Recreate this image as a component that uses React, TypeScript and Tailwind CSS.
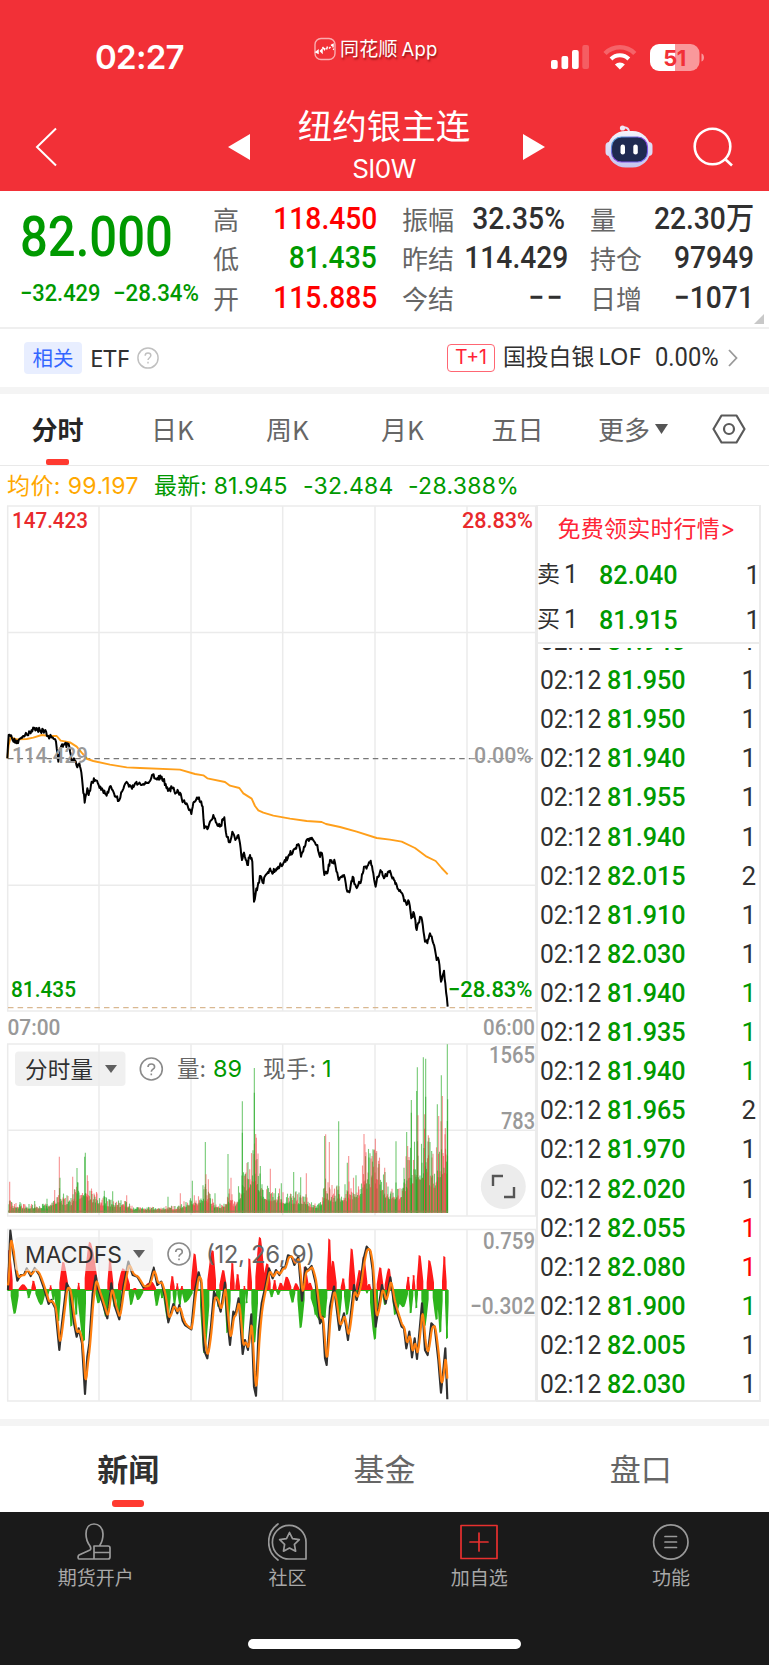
import React from "react";

type Pt = [number, number];
type Lobe = [number, number, number, number];
type Spike = [number, number, "r" | "g"];

const UNIT = 3;
const shift = (pts: Pt[], dx: number, dy: number): Pt[] =>
  pts.map(([x, y]) => [(x + dx) / UNIT, (y + dy) / UNIT]);

function rng(seed: number) {
  let s = seed;
  return () => {
    s = (s * 1664525 + 1013904223) % 4294967296;
    return s / 4294967296;
  };
}

const toPoints = (pts: Pt[]) => pts.map(([x, y]) => x.toFixed(2) + "," + y.toFixed(2)).join(" ");

function roughen(pts: Pt[], amp: number, seed: number): Pt[] {
  const rand = rng(seed);
  const out: Pt[] = [];
  for (let i = 0; i < pts.length - 1; i++) {
    const [x0, y0] = pts[i];
    const [x1, y1] = pts[i + 1];
    const n = Math.max(1, Math.round((x1 - x0) / 0.75));
    out.push(pts[i]);
    for (let k = 1; k < n; k++) {
      out.push([x0 + ((x1 - x0) * k) / n, y0 + ((y1 - y0) * k) / n + (rand() - 0.5) * 2 * amp]);
    }
  }
  out.push(pts[pts.length - 1]);
  return out;
}

const price: Pt[] = [
  ...shift([[22,235],[26,165],[36,175],[50,190],[65,172],[80,163],[92,160],[102,146],[110,144],[122,155],[134,152],[145,168],[158,172],[168,185],[175,245],[182,205],[195,190],[208,200],[215,245],[222,235],[232,262],[238,250],[246,295],[254,368],[262,325],[266,345],[275,305],[286,300],[296,315],[306,325],[320,347],[332,318],[340,335],[356,363],[366,335],[382,308],[394,322],[405,310],[425,315],[448,305],[456,285],[470,298],[485,290],[497,312],[504,333],[516,322],[528,338],[535,335],[545,355],[555,370],[565,385],[574,402],[582,365],[597,352],[608,380],[613,445],[622,448],[630,425],[640,405],[650,430],[660,440],[673,412],[680,470],[688,487],[697,455],[706,480],[715,465],[720,490],[726,540],[732,518],[742,555],[750,525],[757,545],[759,600],[762,665],[767,640],[775,608],[782,588],[788,608],[797,585],[808,570]], 0, 2040),
  ...shift([[95,395],[110,385],[130,370],[145,348],[160,330],[175,312],[183,350],[192,320],[200,300],[213,298],[225,308],[232,315],[238,345],[246,340],[253,405],[262,400],[270,360],[285,368],[296,420],[312,405],[322,455],[330,450],[338,410],[348,440],[364,420],[372,380],[382,378],[392,362],[400,400],[407,440],[412,410],[424,395],[432,415],[450,392],[462,420],[470,435],[480,450],[490,470],[500,495],[507,485],[514,535],[522,520],[530,570],[540,530],[546,540],[555,605],[562,610],[570,580],[580,610],[590,660],[596,660],[603,725],[612,692],[616,730],[623,800]], 720, 2220),
];

const average: Pt[] = [
  ...shift([[22,235],[26,195],[32,172],[50,178],[80,177],[100,173],[125,165],[150,168],[170,168],[182,182],[210,187],[230,200],[245,218],[262,237],[280,243],[330,254],[380,262],[420,264],[540,269],[585,282],[610,286],[622,295],[675,306],[690,317],[718,324],[730,340],[755,356],[765,378],[775,391],[790,398]], 0, 2040),
  ...shift([[100,227],[150,236],[200,243],[245,246],[258,252],[300,261],[350,275],[410,294],[450,299],[485,305],[525,324],[560,350],[587,363],[605,384],[623,403]], 720, 2220),
];

const dif: Pt[] = [
  ...([[24,780],[31,602],[38,660],[52,752],[62,735],[72,735],[80,715],[92,738],[104,714],[118,735],[132,775],[146,822],[154,810],[166,835],[178,960],[186,880],[200,760],[210,780],[222,880],[230,920],[236,895],[246,940],[255,1092],[262,980],[268,940],[278,790],[287,737],[295,780],[305,810],[322,865],[334,760],[345,830],[358,868],[370,770],[385,695],[398,735],[412,740],[430,772],[448,765],[461,713],[472,765],[484,755],[495,800],[505,877],[520,822],[532,850],[538,825],[548,872],[555,885],[574,898],[585,780],[596,727],[604,760],[612,960],[622,985],[632,900],[642,785],[652,810],[662,845],[675,758],[682,870],[690,945],[700,845],[706,855],[716,805],[728,972],[735,930],[744,960],[754,853],[762,1070],[768,1097],[776,900],[785,820]] as Pt[]),
  ...([[5,820],[16,770],[27,715],[38,745],[48,720],[58,735],[68,712],[75,715],[84,676],[95,680],[103,705],[115,680],[126,812],[136,712],[143,722],[155,708],[167,760],[180,880],[188,860],[195,985],[200,1005],[210,830],[222,770],[238,900],[252,850],[264,930],[275,830],[282,765],[290,810],[302,755],[310,690],[320,650],[330,662],[338,720],[347,890],[366,765],[377,820],[391,742],[402,820],[412,850],[425,890],[432,895],[439,955],[448,905],[456,982],[464,925],[471,987],[486,820],[495,960],[503,975],[514,880],[524,890],[535,990],[543,1088],[550,1020],[556,955],[562,1108]] as Pt[]).map(([x, y]): Pt => [x + 780, y]),
];

const level = (pts: Pt[], x: number) => {
  for (let i = 0; i < pts.length - 1; i++) {
    if (x <= pts[i + 1][0]) {
      const t = (x - pts[i][0]) / (pts[i + 1][0] - pts[i][0]);
      return pts[i][1] + (pts[i + 1][1] - pts[i][1]) * Math.max(0, t);
    }
  }
  return pts[pts.length - 1][1];
};

const dea: Pt[] = [];
{
  let v = 760;
  for (let x = 24; x <= 1343; x += 1) {
    v += (level(dif, x) - v) * (x < 40 ? 0.3 : 0.22);
    if (x % 2 === 0) dea.push([x, v]);
  }
}

const redLobes: Lobe[] = [
  ...([[22,38,28,120],[56,82,70,17],[94,108,100,28],[148,156,152,14],[178,204,190,85],[232,240,236,22],[254,292,270,145],[322,340,330,90],[354,390,370,65],[396,412,405,6],[428,468,455,25],[510,524,517,42],[528,536,532,20],[541,550,546,12],[573,595,584,110],[622,648,638,120],[658,680,670,60],[690,704,697,82],[706,720,713,48],[730,737,733,12],[742,756,748,95],[766,794,780,160],[788,812,802,80]] as Lobe[]),
  ...([[38,50,44,30],[54,72,62,22],[70,94,80,40],[100,118,108,20],[128,146,134,70],[142,158,150,22],[200,216,208,155],[210,230,219,88],[242,256,250,35],[266,286,275,125],[288,308,299,60],[304,322,311,100],[318,334,328,18],[350,370,361,68],[374,396,387,65],[438,450,445,40],[456,466,461,45],[470,490,479,105],[500,522,508,90],[546,560,553,102]] as Lobe[]).map(([a, b, p, h]): Lobe => [a + 780, b + 780, p + 780, h]),
];
const greenLobes: Lobe[] = [
  ...([[32,56,44,72],[80,94,86,25],[106,136,124,45],[135,148,142,20],[154,166,160,30],[164,182,175,95],[206,222,214,110],[222,234,229,75],[234,258,252,155],[286,308,295,40],[304,328,318,80],[334,350,344,50],[348,364,356,75],[386,404,393,45],[404,430,414,30],[462,480,470,48],[480,492,486,25],[490,512,504,90],[518,530,523,50],[532,546,540,45],[546,578,556,38],[600,628,613,190],[648,662,655,50],[674,692,682,130],[718,736,727,160],[736,744,740,40],[754,774,763,160]] as Lobe[]),
  ...([[28,42,35,22],[48,62,55,15],[88,106,98,38],[112,134,122,115],[152,202,185,100],[156,178,167,75],[190,202,194,85],[226,246,236,95],[252,272,261,75],[284,298,290,30],[316,326,321,10],[330,354,345,150],[366,382,375,45],[396,425,405,75],[406,444,430,52],[446,460,452,70],[464,474,469,55],[484,506,494,110],[518,536,530,90],[532,548,541,128],[555,566,561,148]] as Lobe[]).map(([a, b, p, h]): Lobe => [a + 780, b + 780, p + 780, h]),
];
const lobePath = (lobes: Lobe[], dir: number) =>
  lobes
    .map(([a, b, p, h]) => {
      const at = (f: number) => 780 + dir * h * f;
      return `M${a} 780 L${a} ${at(0.25)} L${(a + p) / 2} ${at(0.78)} L${p - 3} ${at(1)} L${p + 3} ${at(0.97)} L${(b + p) / 2} ${at(0.76)} L${b} ${at(0.25)} L${b} 780Z`;
    })
    .join("");

const envelope: Pt[] = [[24,50],[35,22],[90,18],[150,20],[175,60],[185,45],[215,35],[230,70],[258,100],[270,60],[300,40],[340,28],[380,28],[400,12],[460,12],[540,15],[575,42],[590,34],[615,70],[640,25],[670,20],[685,60],[705,28],[727,100],[765,190],[785,85],[800,70],[850,48],[920,45],[930,26],[960,22],[975,80],[990,60],[1040,65],[1080,90],[1095,140],[1125,155],[1160,80],[1200,70],[1220,140],[1255,200],[1280,190],[1300,130],[1325,230],[1345,210]];
const spikes: Spike[] = [
  ...([[29,93,"r"],[60,32,"g"],[104,35,"g"],[141,42,"g"],[164,68,"r"],[178,168,"r"],[180,105,"g"],[218,108,"r"],[231,134,"g"],[254,168,"g"],[256,180,"g"],[262,112,"r"],[275,65,"r"],[313,66,"g"],[338,64,"g"],[380,52,"r"],[504,48,"g"],[541,58,"r"],[577,96,"g"],[583,52,"r"],[616,212,"g"],[618,115,"r"],[625,100,"r"],[645,58,"g"],[684,176,"g"],[693,105,"r"],[727,334,"g"],[727,240,"g"],[733,110,"r"],[744,152,"g"],[749,130,"r"],[763,434,"g"],[763,360,"g"],[767,236,"r"],[769,225,"r"],[775,110,"g"],[786,85,"g"],[800,70,"r"]] as Spike[]),
  ...([[1,140,"g"],[31,132,"r"],[64,88,"g"],[101,122,"g"],[122,106,"g"],[139,118,"r"],[194,230,"g"],[197,235,"r"],[208,212,"r"],[236,274,"g"],[262,150,"g"],[266,170,"r"],[312,236,"r"],[315,205,"r"],[336,170,"r"],[346,222,"r"],[350,185,"r"],[374,135,"r"],[408,214,"g"],[432,135,"g"],[440,242,"g"],[443,200,"r"],[454,338,"g"],[454,300,"g"],[470,365,"g"],[472,436,"g"],[474,292,"r"],[490,466,"g"],[497,462,"g"],[497,348,"g"],[494,295,"r"],[505,232,"r"],[515,185,"g"],[532,325,"g"],[536,290,"r"],[544,412,"g"],[547,350,"r"],[556,254,"r"],[562,505,"g"],[563,340,"g"],[562,275,"g"]] as Spike[]).map(([x, h, c]): Spike => [x + 780, h, c]),
];
const volume: Spike[] = (() => {
  const rand = rng(29);
  const out: Spike[] = [];
  for (let x = 27; x < 1344; x += 1.5) {
    const r = rand();
    const h = level(envelope, x) * (0.48 + r * r * 0.85) + 3;
    out.push([x, h, rand() > 0.5 ? "g" : "r"]);
  }
  return out.concat(spikes);
})();

const NUM = "Roboto, 'Noto Sans CJK SC', sans-serif";

function Help({ size, className }: { size: number; className: string }) {
  return (
    <svg width={size} height={size} viewBox="0 0 24 24" fill="none" stroke="currentColor" strokeWidth="1.6" className={className}>
      <circle cx="12" cy="12" r="11" />
      <path d="M8.9 9.6c0-1.9 1.3-3 3.1-3s3.100 1.100 3.100 2.800c0 2.200-3.100 2.400-3.100 4.900" />
      <path d="M12 16.200v1.800" />
    </svg>
  );
}

function StatusBar() {
  return (
    <div className="flex h-[96px] items-start text-white">
      <div className="w-[314px] pt-[37px] pl-[95px] font-[Inter] text-[33px] leading-[40px] font-semibold tracking-[-0.7px]">02:27</div>
      <div className="flex w-[237px] items-center gap-[4px] pt-[36px]">
        <svg width="22" height="24" viewBox="0 0 22 24" fill="none">
          <rect x="1" y="1.500" width="20" height="21" rx="6" stroke="#fff" strokeOpacity=".6" strokeWidth="1.400" />
          <path d="M2 15l2-1.500v2.500zM6.500 14l1.500-1.500v3zM8.500 10l2 2.500.5-1.500M12.500 12.500l1-3M15 11.500l1.500-1.500M17 8.500l2-1v3M19 12l1 .5" stroke="#fff" strokeWidth="1.500" />
        </svg>
        <span className="text-[19px] leading-[24px] tracking-[0.2px] whitespace-nowrap [text-shadow:1px_2px_2px_rgba(90,0,0,0.6)]">同花顺<span className="ml-[4px] font-[Inter] text-[18.500px]">App</span></span>
      </div>
      <svg width="154" height="28" viewBox="551 44 154 28" className="mt-[44px]">
        <g fill="#fff">
          <rect x="551" y="60" width="6.700" height="9" rx="2" />
          <rect x="561.500" y="56" width="6.700" height="13" rx="2" />
          <rect x="572" y="50" width="6.700" height="19" rx="2" />
          <rect x="582.300" y="45" width="6.700" height="24" rx="2" opacity=".22" />
        </g>
        <g fill="none" stroke="#fff" strokeWidth="4">
          <path d="M605 53.500a21 21 0 0 1 29.800 0" opacity=".25" strokeWidth="4.500" />
          <path d="M611 59a12.500 12.500 0 0 1 17.800 0" />
        </g>
        <path d="M619.900 69.500l-5-5a7 7 0 0 1 10 0z" fill="#fff" />
        <path d="M659 44h16v27h-16a9 9 0 0 1-9-9v-9a9 9 0 0 1 9-9z" fill="#fff" />
        <path d="M675 44h15.500a9 9 0 0 1 9 9v9a9 9 0 0 1-9 9h-15.500z" fill="#f9989b" />
        <path d="M701.500 53.500c3.300 1 3.300 7 0 8z" fill="#f9989b" />
        <text x="674.500" y="65.500" textAnchor="middle" fontFamily="Inter" fontWeight="700" fontSize="22" letterSpacing="-0.500" fill="#f23037">51</text>
      </svg>
    </div>
  );
}

function TitleBar() {
  return (
    <div className="flex h-[95px] text-white">
      <svg width="22" height="40" viewBox="0 0 22 40" fill="none" stroke="#fff" strokeWidth="2" className="mt-[31px] ml-[35px]">
        <path d="M21 1.500L2 20l19 18.500" />
      </svg>
      <svg width="22" height="26" viewBox="0 0 22 26" fill="#fff" className="mt-[38px] ml-[171px]"><path d="M22 0v26L0 13z" /></svg>
      <div className="flex w-[273px] flex-col items-center pt-[7px] pr-[5px]">
        <span className="text-[34.500px] leading-[42px]">纽约银主连</span>
        <span className="mt-[8px] font-[Inter] text-[26px] leading-[32px] tracking-[-0.500px]">SI0W</span>
      </div>
      <svg width="22" height="26" viewBox="0 0 22 26" fill="#fff" className="mt-[38px]"><path d="M0 0v26l22-13z" /></svg>
      <svg width="48" height="44" viewBox="0 0 48 44" className="mt-[28px] ml-[60px]">
        <defs>
          <linearGradient id="shell" x1="0" y1="0" x2="0" y2="1"><stop offset="0" stopColor="#f4f3fb" /><stop offset="1" stopColor="#c5c5ef" /></linearGradient>
          <linearGradient id="rim" x1="0" y1="0" x2="1" y2="1"><stop offset="0" stopColor="#3fb4d8" /><stop offset=".5" stopColor="#8b3fe0" /><stop offset="1" stopColor="#6a6cf0" /></linearGradient>
        </defs>
        <path d="M17 4.500c4-2 7-.5 7 4" fill="none" stroke="#e4e0f5" strokeWidth="2" />
        <circle cx="17.500" cy="4" r="2.600" fill="#f1e7f5" />
        <rect x="0.500" y="18" width="9" height="14" rx="4" fill="#dcdcf6" />
        <rect x="38.500" y="18" width="9" height="14" rx="4" fill="#dcdcf6" />
        <rect x="2.500" y="7" width="43" height="36.500" rx="18" fill="url(#shell)" />
        <rect x="6.500" y="13" width="36" height="25" rx="10" fill="#1f2a50" stroke="url(#rim)" strokeWidth="1.100" />
        <rect x="15.500" y="20.500" width="4.500" height="10" rx="2.200" fill="#fff" />
        <rect x="28.300" y="20.500" width="4.500" height="10" rx="2.200" fill="#fff" />
      </svg>
      <svg width="42" height="42" viewBox="0 0 42 42" fill="none" stroke="#fff" strokeWidth="2.600" className="mt-[31px] ml-[40px]">
        <circle cx="19.500" cy="19.500" r="17.800" />
        <path d="M31.500 31.500l7.500 7" />
      </svg>
    </div>
  );
}

const stats: { label: string; value: string; tone: string }[][] = [
  [
    { label: "高", value: "118.450", tone: "text-[#ff0000]" },
    { label: "低", value: "81.435", tone: "text-[#009900]" },
    { label: "开", value: "115.885", tone: "text-[#ff0000]" },
  ],
  [
    { label: "振幅", value: "32.35%", tone: "text-[#303030]" },
    { label: "昨结", value: "114.429", tone: "text-[#303030]" },
    { label: "今结", value: "−−", tone: "text-[#303030] tracking-[2.500px]" },
  ],
  [
    { label: "量", value: "22.30万", tone: "text-[#303030]" },
    { label: "持仓", value: "97949", tone: "text-[#303030]" },
    { label: "日增", value: "−1071", tone: "text-[#303030]" },
  ],
];

function Quote() {
  return (
    <section className="relative flex h-[138px] border-b-2 border-[#efefef]">
      <div className="w-[213px] shrink-0 pl-[20px] font-medium text-[#009900]">
        <div className="mt-[12px] w-[190px] origin-left scale-x-[0.875] font-[Roboto] text-[56px] leading-[68px]">82.000</div>
        <div className="mt-[8px] flex font-[Roboto] text-[24px] leading-[28px] whitespace-nowrap">
          <span className="w-[93px] origin-left scale-x-[0.910]">−32.429</span>
          <span className="origin-left scale-x-[0.930]">−28.34%</span>
        </div>
      </div>
      <div className="grid w-[542px] grid-cols-[164px_163px_164px] gap-x-[25px] pt-[8px]">
        {stats.map((col, i) => (
          <div key={i}>
            {col.map((s) => (
              <div key={s.label} className="flex h-[39.500px] items-center justify-between leading-[38px] whitespace-nowrap">
                <span className="text-[26px] text-[#666]">{s.label}</span>
                <span className={"origin-right scale-x-[0.910] text-[31px] font-medium " + s.tone} style={{ fontFamily: NUM }}>{s.value}</span>
              </div>
            ))}
          </div>
        ))}
      </div>
      <svg width="10" height="10" viewBox="0 0 10 10" className="absolute right-[5px] bottom-[3px]"><path d="M10 0v10H0z" fill="#c8c8c8" /></svg>
    </section>
  );
}

function Related() {
  return (
    <section className="flex h-[58px] items-center pl-[24px]">
      <span className="flex h-[32px] w-[58px] items-center justify-center rounded-[4px] bg-[#e8eeff] pb-[2px] text-[20.500px] text-[#3366ff]">相关</span>
      <span className="ml-[8px] w-[47px] font-['Noto_Sans'] text-[24px] text-[#303030]">ETF</span>
      <Help size={22} className="text-[#c0c0c0]" />
      <span className="ml-[288px] flex h-[28px] w-[48px] items-center justify-center rounded-[4px] border border-[#ff6673] font-[Inter] text-[19.500px] text-[#ff2436]">T+1</span>
      <span className="ml-[8px] w-[152px] pb-[2px] text-[22.800px] whitespace-nowrap text-[#303030]">国投白银<span className="ml-[4px] font-['Noto_Sans'] text-[23.500px]">LOF</span></span>
      <span className="w-[74px] origin-left scale-x-[0.950] font-[Roboto] text-[25px] text-[#303030]">0.00%</span>
      <svg width="10" height="18" viewBox="0 0 10 18" fill="none" stroke="#999" strokeWidth="1.800" className="-ml-[1px]"><path d="M1 1l7.500 8L1 17" /></svg>
    </section>
  );
}

function PeriodTabs() {
  return (
    <nav className="flex h-[72px] border-b border-[#e9e9e9] text-[26px] text-[#666]">
      {["分时", "日K", "周K", "月K", "五日"].map((t, i) => (
        <div key={t} className="relative flex w-[115px] items-center justify-center pb-[2px]">
          <span className={i === 0 ? "font-bold text-[#262626]" : "font-normal"}>{t}</span>
          {i === 0 && <i className="absolute bottom-0 left-[46px] h-[6px] w-[23px] rounded-[2px] bg-[#ff3a30]" />}
        </div>
      ))}
      <div className="flex w-[116px] items-center justify-center gap-[5px] pb-[2px]">
        更多
        <svg width="13" height="10" viewBox="0 0 13 10"><path d="M0 0h13L6.500 10z" fill="#555" /></svg>
      </div>
      <div className="flex flex-1 items-center pb-[2px] pl-[21px]">
        <svg width="34" height="30" viewBox="0 0 34 30" fill="none" stroke="#5a5a5a" strokeWidth="2.200">
          <path d="M9.500 1.500h15L32.500 15l-8 13.500h-15L1.500 15z" strokeLinejoin="round" />
          <circle cx="17" cy="15" r="5" />
        </svg>
      </div>
    </nav>
  );
}

function Charts() {
  const vertical = [99, 191, 282.7, 375, 467];
  return (
    <svg width="536" height="897" viewBox="0 505 536 897" className="shrink-0 overflow-visible">
      <g stroke="#ebebeb" strokeWidth="1.500" fill="none">
        <rect x="7.700" y="506" width="528" height="505" />
        <rect x="7.700" y="1044" width="528" height="172" />
        <rect x="7.700" y="1229.500" width="528" height="171.500" />
        {vertical.map((x) => (
          <path key={x} d={`M${x} 506V1011M${x} 1044V1216M${x} 1229.500V1401`} />
        ))}
        <path d="M8 632.500H535M8 885.300H535M8 1130.300H535M8 1315.600H535" />
      </g>
      <path d="M8 758.700H470" stroke="#777" strokeWidth="1.200" strokeDasharray="5.500 4.100" />
      <path d="M470 758.700H535" stroke="#999" strokeWidth="1.200" strokeDasharray="5.500 4.100" />
      <path d="M8 1007.600H535" stroke="#d9b891" strokeWidth="1.200" strokeDasharray="5.500 4.100" />

      <polyline points={toPoints(average)} fill="none" stroke="#ff9f1a" strokeWidth="1.900" strokeLinejoin="round" />
      <polyline points={toPoints(roughen(price, 2.6, 11))} fill="none" stroke="#000" strokeWidth="2" strokeLinejoin="round" />

      <g fontFamily={NUM} fontSize="22.500" fontWeight="500">
        <text x="12" y="528" fill="#e9292c" textLength="76" lengthAdjust="spacingAndGlyphs">147.423</text>
        <text x="462" y="528" fill="#e9292c" textLength="71" lengthAdjust="spacingAndGlyphs">28.83%</text>
        <text x="12" y="762.500" fill="#999" textLength="76" lengthAdjust="spacingAndGlyphs">114.429</text>
        <text x="474" y="762.500" fill="#999" textLength="58" lengthAdjust="spacingAndGlyphs">0.00%</text>
        <text x="11" y="997" fill="#009900" textLength="65" lengthAdjust="spacingAndGlyphs">81.435</text>
        <text x="448" y="997" fill="#009900" textLength="84.500" lengthAdjust="spacingAndGlyphs">−28.83%</text>
        <text x="7.500" y="1034.500" fill="#999" textLength="53" lengthAdjust="spacingAndGlyphs">07:00</text>
        <text x="483" y="1034.500" fill="#999" textLength="52" lengthAdjust="spacingAndGlyphs">06:00</text>
      </g>

      <g strokeWidth="1.100">
        {volume.map(([x, h, c], i) => (
          <path key={i} d={`M${(x / UNIT).toFixed(2)} 1212.700v${(-h / UNIT).toFixed(2)}`} stroke={c === "g" ? "#1fa81f" : "#f03838"} strokeOpacity={c === "g" ? 0.62 : 0.55} />
        ))}
      </g>
      <path d="M8 1211.500H448" stroke="#8f8450" strokeWidth="2" strokeOpacity=".7" />

      <g transform="translate(0 1030) scale(0.33333)">
        <path d="M22 777H1343V783H22z" fill="#2db41c" />
        <path d={lobePath(redLobes, -1)} fill="#ff1a1a" />
        <path d={lobePath(greenLobes, 1)} fill="#2db41c" />
        <polyline points={toPoints(dif)} fill="none" stroke="#303030" strokeWidth="6.500" strokeLinejoin="round" />
        <polyline points={toPoints(dea)} fill="none" stroke="#ff8010" strokeWidth="6.500" strokeLinejoin="round" />
      </g>

      <g fill="#ececec">
        <rect x="15" y="1051.500" width="110.500" height="34.500" rx="4" fillOpacity=".8" />
        <rect x="15" y="1237" width="138" height="34" rx="4" fillOpacity=".6" />
      </g>
      <g fill="#5f5f5f">
        <path d="M105 1065h12l-6 8z" />
        <path d="M133 1250h12l-6 8z" />
      </g>
      <g fill="#303030" fontFamily="Inter, 'Noto Sans CJK SC', sans-serif" fontSize="22.500">
        <text x="25" y="1077.500" textLength="68">分时量</text>
        <text x="25" y="1262.500" fontSize="23" textLength="97" lengthAdjust="spacingAndGlyphs">MACDFS</text>
        <g fill="#666">
          <text x="177" y="1077">量:</text>
          <text x="263" y="1077" textLength="53">现手:</text>
          <text x="206" y="1262.500" fontSize="24" textLength="109">(12, 26, 9)</text>
        </g>
        <g fill="#009900" fontSize="23.500">
          <text x="213" y="1076.500" textLength="29">89</text>
          <text x="322" y="1076.500">1</text>
        </g>
      </g>
      <g fill="none" stroke="#8a8a8a" strokeWidth="1.600">
        <circle cx="151.300" cy="1069" r="11" />
        <path d="M148 1067c0-2 1.500-3 3.300-3s3.300 1.200 3.300 2.900c0 2.200-3.300 2.300-3.300 4.900M151.300 1073.500v1.800" />
        <circle cx="179" cy="1254" r="11" />
        <path d="M175.700 1252c0-2 1.500-3 3.300-3s3.300 1.200 3.300 2.900c0 2.200-3.300 2.300-3.300 4.900M179 1258.500v1.800" />
      </g>
      <g fill="#999" fontFamily={NUM} fontSize="23" fontWeight="500">
        <text x="489" y="1063" textLength="46" lengthAdjust="spacingAndGlyphs">1565</text>
        <text x="501" y="1128.500" textLength="34" lengthAdjust="spacingAndGlyphs">783</text>
        <text x="483" y="1248.500" textLength="52" lengthAdjust="spacingAndGlyphs">0.759</text>
        <text x="470" y="1313.500" textLength="65" lengthAdjust="spacingAndGlyphs">−0.302</text>
      </g>
      <circle cx="503.300" cy="1186.500" r="22.500" fill="#ececec" />
      <path d="M493 1186v-10h10M514 1187v10h-10" fill="none" stroke="#555" strokeWidth="2.400" />
    </svg>
  );
}

const trades: [string, string, string][] = [
  ["81.940", "1", "k"], ["81.950", "1", "k"], ["81.950", "1", "k"], ["81.940", "1", "k"], ["81.955", "1", "k"],
  ["81.940", "1", "k"], ["82.015", "2", "k"], ["81.910", "1", "k"], ["82.030", "1", "k"], ["81.940", "1", "g"],
  ["81.935", "1", "g"], ["81.940", "1", "g"], ["81.965", "2", "k"], ["81.970", "1", "k"], ["82.020", "1", "k"],
  ["82.055", "1", "r"], ["82.080", "1", "r"], ["81.900", "1", "g"], ["82.005", "1", "k"], ["82.030", "1", "k"],
];
const tones: Record<string, string> = { k: "text-[#303030]", g: "text-[#009900]", r: "text-[#ff0000]" };

function OrderPanel() {
  return (
    <aside className="flex h-[897px] w-[225px] flex-col border-2 border-t-[1px] border-[#ebebeb] font-[Roboto] text-[26px] text-[#303030]">
      <div className="flex h-[46px] items-center justify-center pr-[4px] pb-[1px] text-[23px] leading-[30px] tracking-[0.200px] text-[#ff2436]" style={{ fontFamily: "Inter, 'Noto Sans CJK SC', sans-serif" }}>免费领实时行情&gt;</div>
      {[["卖", "82.040"], ["买", "81.915"]].map(([side, p]) => (
        <div key={side} className="flex h-[45px] items-center leading-[32px]">
          <span className="flex w-[61px] items-center gap-[4px]">
            <span className="-ml-[1px] text-[23px]" style={{ fontFamily: NUM }}>{side}</span>
            <span className="text-[25px]">1</span>
          </span>
          <span className="w-[90px] origin-left scale-x-[0.970] font-medium text-[#009900]">{p}</span>
          <span className="mr-[-1px] ml-auto">1</span>
        </div>
      ))}
      <div className="h-[2px] bg-[#ebebeb]" />
      <div className="mt-[4px] min-h-0 flex-1 overflow-hidden">
        <div className="-mt-[26.500px] leading-[32px]">
          {trades.map(([p, q, tone], i) => (
            <div key={i} className="flex h-[39.120px] items-center pr-[3px] pl-[2px]">
              <span className="w-[67px] origin-left scale-x-[0.945]">02:12</span>
              <span className="w-[90px] origin-left scale-x-[0.970] font-medium text-[#009900]">{p}</span>
              <span className={"ml-auto " + tones[tone]}>{q}</span>
            </div>
          ))}
        </div>
      </div>
    </aside>
  );
}

const bottomItems = [
  {
    label: "期货开户",
    tone: "text-[#9a9a9a]",
    icon: <path d="M14 23c-3-4-4-7-4-12 0-6 3-10 8-10s9 4 9 10c0 4-1 8-3 11M14 23c1 2 1.500 3 0 4L3 32c-1.500 1-1 4 0 4h14M18 23h14c1.500 0 2 .5 2 2v9c0 1.500-.5 2-2 2H18zM18 29.500h16" />,
  },
  {
    label: "社区",
    tone: "text-[#9a9a9a]",
    icon: <path d="M38 36H22a16.800 16.800 0 1 1 16-16.500zM10 1a22 22 0 0 0 0 36M21.500 9.500l3 6.200 6.800 1-4.900 4.700 1.200 6.800-6.100-3.200-6 3.200 1.100-6.800-4.900-4.700 6.800-1z" />,
  },
  {
    label: "加自选",
    tone: "text-[#e8302f]",
    icon: <path d="M2 2.500h36v33H2zM20 10v18M11 19h18" />,
  },
  {
    label: "功能",
    tone: "text-[#9a9a9a]",
    icon: <path d="M37 19a17.200 17.200 0 1 1-34.400 0 17.200 17.200 0 0 1 34.400 0zM14 13.500h11.500M14 19h11.500M14 24.500h11.500" />,
  },
];

export default function App() {
  return (
    <main className="flex h-[1665px] w-[769px] flex-col overflow-hidden bg-white" style={{ fontFamily: "'Noto Sans CJK SC', 'Noto Sans', sans-serif" }}>
      <header className="h-[191px] shrink-0 bg-[#f23037]">
        <StatusBar />
        <TitleBar />
      </header>
      <Quote />
      <Related />
      <div className="h-[7px] bg-[#f4f4f4]" />
      <PeriodTabs />
      <div className="flex h-[39px] items-center pt-[2px] pl-[7px] text-[23px] whitespace-nowrap text-[#009900]" style={{ fontFamily: "Inter, 'Noto Sans CJK SC', sans-serif" }}>
        <span className="w-[147px] tracking-[0.400px] text-[#ffa800]">均价: 99.197</span>
        <span className="w-[149px] tracking-[0.150px]">最新: 81.945</span>
        <span className="w-[105px] tracking-[0.200px]">-32.484</span>
        <span className="tracking-[0.300px]">-28.388%</span>
      </div>
      <div className="flex h-[897px]">
        <Charts />
        <OrderPanel />
      </div>
      <div className="mt-[17px] h-[7px] bg-[#f4f4f4]" />
      <nav className="grid h-[86px] grid-cols-3 text-[31px] text-[#666]">
        {["新闻", "基金", "盘口"].map((t, i) => (
          <div key={t} className="relative flex items-center justify-center pb-[2px]">
            <span className={i === 0 ? "font-bold text-[#303030]" : "font-normal"}>{t}</span>
            {i === 0 && <i className="absolute bottom-[5px] left-[112px] h-[7px] w-[32px] rounded-[3px] bg-[#ff3a30]" />}
          </div>
        ))}
      </nav>
      <footer className="flex flex-1 flex-col bg-[#1a1a1a]">
        <div className="grid grid-cols-4 pt-[11px] pr-[2px]">
          {bottomItems.map((b) => (
            <div key={b.label} className="flex flex-col items-center">
              <svg width="40" height="38" viewBox="0 0 40 38" fill="none" stroke="currentColor" strokeWidth="1.700" strokeLinejoin="round" strokeLinecap="round" className={b.tone}>{b.icon}</svg>
              <span className="mt-[3px] text-[19px] leading-[26px] text-[#a8a8a8]">{b.label}</span>
            </div>
          ))}
        </div>
        <div className="mx-auto mt-auto mb-[16px] h-[10px] w-[273px] rounded-full bg-white" />
      </footer>
    </main>
  );
}
